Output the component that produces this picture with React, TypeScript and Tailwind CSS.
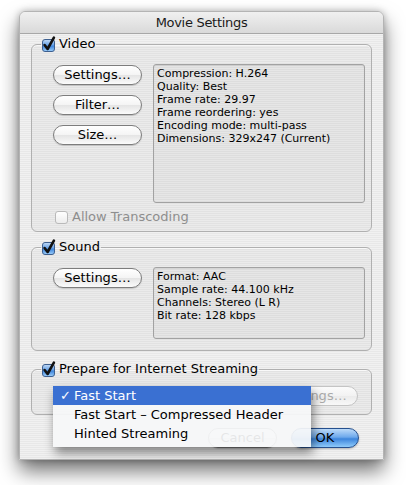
import type { ReactNode } from "react";

const stripes =
  "bg-[repeating-linear-gradient(to_bottom,#f1f1f1_0px,#f1f1f1_1px,#e8e8e8_1px,#e8e8e8_2px)]";

const AquaCheck = ({ checked = true, disabled = false }: { checked?: boolean; disabled?: boolean }) => (
  <svg width="15" height="15" viewBox="0 0 15 15" className="shrink-0 overflow-visible">
    <defs>
      <linearGradient id="boxBlue" x1="0" y1="0" x2="0" y2="1">
        <stop offset="0" stopColor="#c4dcf7" />
        <stop offset="0.45" stopColor="#6aa3e6" />
        <stop offset="0.55" stopColor="#3f86dc" />
        <stop offset="1" stopColor="#9fd0fb" />
      </linearGradient>
      <linearGradient id="boxGray" x1="0" y1="0" x2="0" y2="1">
        <stop offset="0" stopColor="#ffffff" />
        <stop offset="1" stopColor="#ececec" />
      </linearGradient>
    </defs>
    <rect
      x="1.5"
      y="2.5"
      width="12"
      height="12"
      rx="2.5"
      fill={disabled ? "url(#boxGray)" : "url(#boxBlue)"}
      stroke={disabled ? "#b9b9b9" : "#3d5f8f"}
    />
    {checked && (
      <path
        d="M3.6 8 L6.6 12 L12.9 0.6"
        fill="none"
        stroke="#111"
        strokeWidth="2.6"
        strokeLinecap="round"
        strokeLinejoin="round"
      />
    )}
  </svg>
);

const AquaButton = ({
  children,
  width = "w-[89px]",
  disabled = false,
  primary = false,
}: {
  children: ReactNode;
  width?: string;
  disabled?: boolean;
  primary?: boolean;
}) => (
  <div
    className={`${width} h-[20px] shrink-0 rounded-full border flex items-center justify-center text-[13px] leading-[18px] ${
      primary
        ? "border-[#26508e] text-black bg-[linear-gradient(to_bottom,#bcdaf9_0%,#6ea9ec_45%,#3d85dc_55%,#8fcbfb_100%)] shadow-[0_1px_2px_rgba(0,0,0,0.25)]"
        : disabled
        ? "border-[#c4c4c4] text-[#aaaaaa] bg-[linear-gradient(to_bottom,#fbfbfb_0%,#f2f2f2_50%,#ebebeb_51%,#f8f8f8_100%)]"
        : "border-[#7d7d7d] text-black bg-[linear-gradient(to_bottom,#ffffff_0%,#f4f4f4_50%,#e4e4e4_51%,#fbfbfb_100%)] shadow-[0_1px_1px_rgba(0,0,0,0.15)]"
    }`}
  >
    {children}
  </div>
);

const Group = ({ label, children, className = "" }: { label: string; children: ReactNode; className?: string }) => (
  <fieldset
    className={`border border-[#b0b0b0] rounded-[6px] bg-black/[0.025] shadow-[inset_0_1px_0_rgba(255,255,255,0.7)] ${className}`}
  >
    <legend className="ml-[9px] pr-[1px]">
      <div className="flex items-center h-[16px] gap-[3px] text-[13px] leading-[16px] text-black">
        <AquaCheck />
        <span>{label}</span>
      </div>
    </legend>
    {children}
  </fieldset>
);

const InfoBox = ({ lines, height }: { lines: string[]; height: string }) => (
  <div
    className={`w-[212px] ${height} border border-[#a2a2a2] rounded-[3px] bg-black/[0.02] shadow-[inset_0_1px_1px_rgba(0,0,0,0.08)] px-[3px] pt-[2px] text-[11px] leading-[13px] text-black`}
  >
    {lines.map((l) => (
      <div key={l} className="whitespace-nowrap">
        {l}
      </div>
    ))}
  </div>
);

const videoInfo = [
  "Compression: H.264",
  "Quality: Best",
  "Frame rate: 29.97",
  "Frame reordering: yes",
  "Encoding mode: multi-pass",
  "Dimensions: 329x247 (Current)",
];

const soundInfo = [
  "Format: AAC",
  "Sample rate: 44.100 kHz",
  "Channels: Stereo (L R)",
  "Bit rate: 128 kbps",
];

const menuItems = ["Fast Start", "Fast Start – Compressed Header", "Hinted Streaming"];

export default function App() {
  return (
    <div className="w-[406px] h-[485px] bg-white pl-[19px] pt-[11px] overflow-hidden font-['DejaVu_Sans',sans-serif]">
      <div
        className={`relative w-[365px] h-[449px] rounded-t-[6px] border border-[#b4b4b4] ${stripes} shadow-[0_11px_20px_rgba(0,0,0,0.55),0_0_7px_rgba(0,0,0,0.25)]`}
      >
        <div className="h-[22px] rounded-t-[6px] border-b border-[#a7a7a7] bg-[linear-gradient(to_bottom,#f0f0f0,#d9d9d9)] flex items-center justify-center text-[13px] tracking-[-0.3px] text-[#1a1a1a]">
          Movie Settings
        </div>

        <div className="px-[11px] pt-[2px]">
          <Group label="Video">
            <div className="flex pl-[21px] pt-[12px]">
              <div className="flex flex-col gap-[10px] mt-px">
                <AquaButton>Settings…</AquaButton>
                <AquaButton>Filter…</AquaButton>
                <AquaButton>Size…</AquaButton>
              </div>
              <div className="ml-[11px]">
                <InfoBox lines={videoInfo} height="h-[139px]" />
              </div>
            </div>
            <div className="flex items-center gap-[3px] pl-[22px] mt-[7px] mb-[8px] h-[13px] text-[13px] leading-[13px] text-[#8e8e8e]">
              <AquaCheck checked={false} disabled />
              <span>Allow Transcoding</span>
            </div>
          </Group>

          <Group label="Sound" className="mt-[7px]">
            <div className="flex pl-[21px] pt-[12px] pb-[11px]">
              <div className="mt-px">
                <AquaButton>Settings…</AquaButton>
              </div>
              <div className="ml-[11px]">
                <InfoBox lines={soundInfo} height="h-[72px]" />
              </div>
            </div>
          </Group>

          <Group label="Prepare for Internet Streaming" className="mt-[10px]">
            <div className="flex justify-end pr-[13px] pt-[9px] pb-[8px]">
              <AquaButton disabled>Settings…</AquaButton>
            </div>
          </Group>

          <div className="flex justify-end gap-[14px] pr-[13px] mt-[13px]">
            <AquaButton width="w-[69px]">Cancel</AquaButton>
            <AquaButton width="w-[68px]" primary>
              OK
            </AquaButton>
          </div>
        </div>

        <div className="absolute left-[33px] top-[374px] w-[258px] pb-[4px] bg-[#f6f7f9]/[0.93] shadow-[2px_6px_10px_rgba(0,0,0,0.45)] text-[13px] leading-[19px]">
          {menuItems.map((item, i) => (
            <div
              key={item}
              className={`h-[19px] flex items-center whitespace-nowrap ${
                i === 0 ? "bg-[#3a70d2] text-white" : "text-black"
              }`}
            >
              <span className="w-[21px] pl-[7px] text-[13px] font-bold">{i === 0 ? "✓" : ""}</span>
              <span>{item}</span>
            </div>
          ))}
        </div>
      </div>
    </div>
  );
}
